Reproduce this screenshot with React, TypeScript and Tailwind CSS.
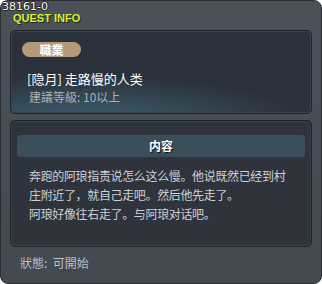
import * as React from "react";

const cjk = { fontFamily: '"Noto Sans CJK SC", "Noto Sans", sans-serif' };

export default function App() {
  return (
    <div className="w-[322px] h-[284px] bg-white" style={cjk}>
      <div className="relative flex h-full flex-col rounded-[8px] border border-[#2b2f35] bg-gradient-to-b from-[#4a5159] to-[#434950]">
        {/* title */}
        <div className="h-[29px]">
          <div
            className="pl-[1px] text-[11px] leading-[11px] text-white"
            style={{ fontFamily: '"DejaVu Sans", sans-serif', textShadow: "1px 0 #222, -1px 0 #222, 0 1px #222, 0 -1px #222" }}
          >
            38161-0
          </div>
          <div
            className="pl-[12px] pt-[1px] text-[11px] font-bold leading-[11px] text-[#d6f03c]"
            style={{ fontFamily: '"Liberation Sans", sans-serif', textShadow: "1px 1px #1f2a10" }}
          >
            QUEST INFO
          </div>
        </div>

        {/* job panel */}
        <div className="mx-[9px] h-[84px] rounded-[5px] border border-[#1e232a] bg-[#2b313b] bg-[radial-gradient(ellipse_90%_70%_at_25%_110%,#3f6070_0%,#334652_45%,#2b313b_80%)] px-[11px] pt-[11px] shadow-[inset_0_0_0_1px_#3d454f]">
          <div className="flex h-[15px] w-[59px] items-center justify-center rounded-full bg-[#b49a78] text-[12px] font-bold leading-none text-white">
            職業
          </div>
          <div className="mt-[14px] pl-[5px] text-[13px] leading-[15px] text-white">[隐月] 走路慢的人类</div>
          <div className="mt-[3px] pl-[7px] text-[12px] leading-[15px] text-[#a7afb7]">建議等級: 10以上</div>
        </div>

        {/* content panel */}
        <div className="mx-[9px] mt-[6px] h-[127px] rounded-[5px] border border-[#1e232a] bg-[#2e333c] px-[6px] pt-[14px] shadow-[inset_0_0_0_1px_#3a414b]">
          <div
            className="flex h-[22px] items-center justify-center rounded-[3px] bg-[#3a4f5b] text-[12px] font-bold text-white"
            style={{ textShadow: "1px 1px #111" }}
          >
            内容
          </div>
          <div className="mt-[9px] whitespace-nowrap pl-[12px] text-[12px] leading-[19px] tracking-[-0.35px] text-[#cdd1d5]">
            <div>奔跑的阿琅指责说怎么这么慢。他说既然已经到村</div>
            <div>庄附近了，就自己走吧。然后他先走了。</div>
            <div>阿琅好像往右走了。与阿琅对话吧。</div>
          </div>
        </div>

        {/* status */}
        <div className="pl-[19px] pt-[8px] text-[12px] leading-[15px] text-[#b9bfc5]">狀態:&nbsp; 可開始</div>
      </div>
    </div>
  );
}
